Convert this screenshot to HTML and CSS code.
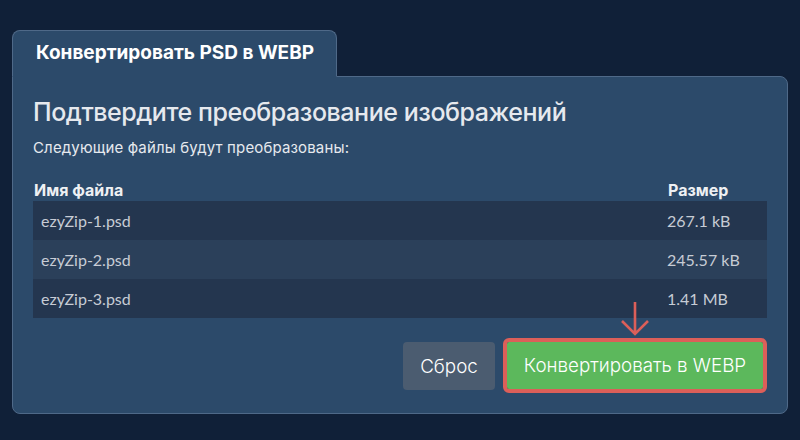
FILE: index.html
```html
<!DOCTYPE html>
<html lang="ru">
<head>
<meta charset="utf-8">
<title>Конвертировать PSD в WEBP</title>
<link rel="stylesheet" href="styles.css">
</head>
<body>
<div class="wrap">
  <div class="tab">Конвертировать PSD в WEBP</div>
  <div class="panel">
    <h1 class="title">Подтвердите преобразование изображений</h1>
    <p class="sub">Следующие файлы будут преобразованы:</p>
    <div class="table">
      <div class="row head"><div class="name">Имя файла</div><div class="size">Размер</div></div>
      <div class="row odd"><div class="name">ezyZip-1.psd</div><div class="size">267.1 kB</div></div>
      <div class="row even"><div class="name">ezyZip-2.psd</div><div class="size">245.57 kB</div></div>
      <div class="row odd"><div class="name">ezyZip-3.psd</div><div class="size">1.41 MB</div></div>
    </div>
    <div class="actions">
      <button class="btn reset">Сброс</button>
      <button class="btn convert">Конвертировать в WEBP
        <svg class="arrow" width="30" height="36" viewBox="0 0 30 36"><path d="M15 1 V33 M2 20 L15 33 L28 20" fill="none" stroke="#dc5f59" stroke-width="2.6"/></svg>
      </button>
    </div>
  </div>
</div>
</body>
</html>
```
FILE: styles.css
```css
* { box-sizing: border-box; }
body {
  margin: 0;
  background: #102038;
  font-family: Inter, "Noto Sans", sans-serif;
  width: 800px;
  height: 440px;
  overflow: hidden;
}
.wrap {
  padding: 30px 12px 0 12px;
}
.tab {
  position: relative;
  z-index: 1;
  width: 325px;
  height: 47px;
  margin-bottom: -1px;
  background: #2c4a6a;
  border: 1px solid #4f6988;
  border-bottom: 1px solid #2c4a6a;
  border-radius: 8px 8px 0 0;
  padding: 11px 0 0 23px;
  color: #ffffff;
  font-weight: 700;
  font-size: 19px;
  letter-spacing: 0;
  line-height: 22px;
}
.panel {
  background: #2c4a6a;
  border: 1px solid #4f6988;
  border-radius: 0 8px 8px 8px;
  padding: 20px 20px 23px 20px;
}
.title {
  margin: 0;
  font-size: 25px;
  line-height: 30px;
  font-weight: 500;
  letter-spacing: -0.45px;
  color: #e6e9ee;
}
.sub {
  margin: 11px 0 0 0;
  font-size: 15px;
  line-height: 20px;
  letter-spacing: 0.15px;
  color: #e6e9ee;
}
.table {
  margin-top: 22px;
}
.row {
  display: flex;
  height: 39px;
  line-height: 39px;
  font-family: Lato, "Noto Sans", sans-serif;
  font-size: 16px;
  color: #c7ccd5;
}
.row .name { flex: 1; padding: 0 8px; }
.row .size { width: 108px; padding: 0 8px; }
.row.head {
  height: 21px;
  line-height: 20px;
  font-family: Inter, "Noto Sans", sans-serif;
  font-size: 16px;
  font-weight: 700;
  color: #eef0f3;
}
.row.head .name, .row.head .size { padding: 0 1px; }
.row.head .size { width: 100px; }
.odd { background: #24364f; }
.even { background: #2b405a; }
.actions {
  display: flex;
  justify-content: flex-end;
  align-items: flex-start;
  gap: 12px;
  margin-top: 24px;
  padding-right: 4px;
}
.btn {
  border: none;
  font-family: Inter, "Noto Sans", sans-serif;
  font-size: 18.8px;
  font-weight: 300;
  color: #ffffff;
  border-radius: 4px;
  padding: 0;
}
.reset {
  width: 92px;
  height: 48px;
  background: #4b5c70;
}
.convert {
  position: relative;
  width: 256px;
  height: 47px;
  background: #5cb85c;
  outline: 4px solid #dc5f59;
  border-radius: 2px;
}
.arrow {
  position: absolute;
  left: 113px;
  top: -41px;
}
```
